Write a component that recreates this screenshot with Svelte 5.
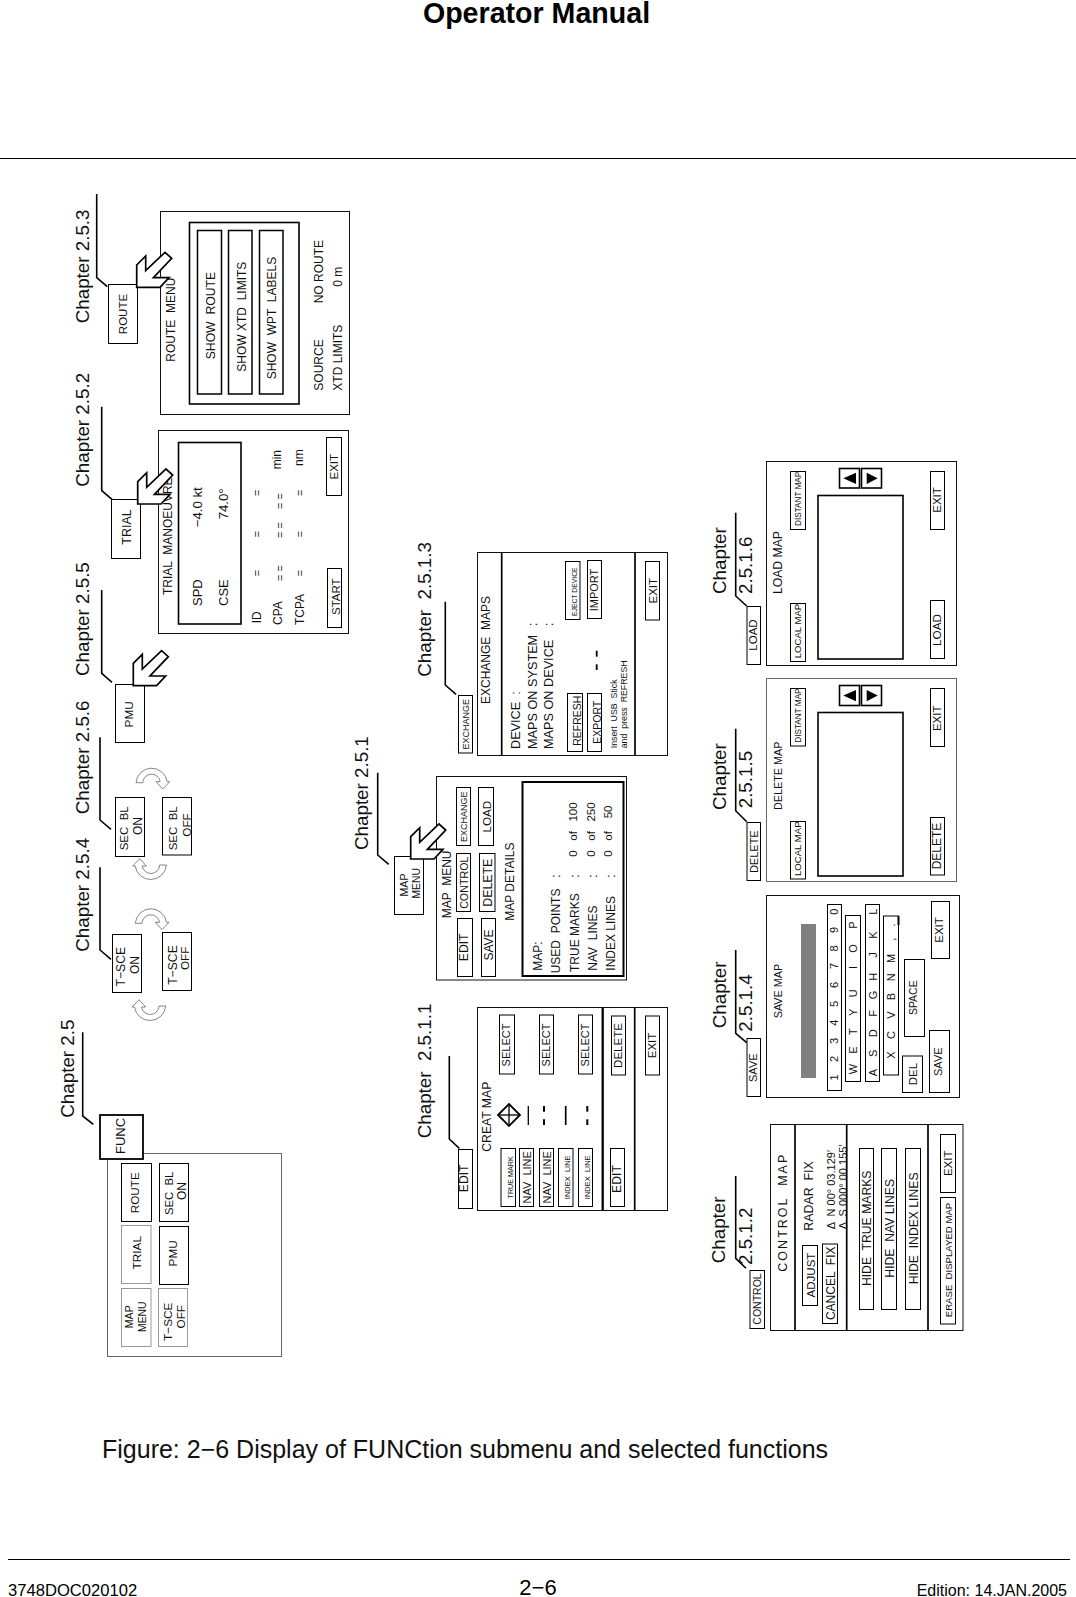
<script>
  // [x1, y1, x2, y2, class]
  const rects = [
    // ROUTE
    [160.5,211.5,349.5,414.5,'p'],[189.5,222.5,299,404,'k'],[197.5,230.5,221.5,394,'b2'],[228.5,230.5,252,394,'b2'],[259.5,230.5,283,394,'b2'],
    [108.5,284.5,137.5,343.5,'b'],
    // TRIAL
    [158.5,430.5,348.5,633.5,'p'],[178.5,442.5,241,624,'k'],[326.5,437.5,341.5,495.5,'b'],[327.5,568.5,341.5,627.5,'b'],[111.5,499.5,140.5,558.5,'b'],
    // PMU / toggles
    [115.5,684.5,144.5,742.5,'b'],[115.5,797.5,144.5,856.5,'b'],[162.5,797.5,191.5,855,'b'],[112.5,934.5,141.5,992.5,'b'],[162.5,932.5,191.5,990.5,'b'],
    // FUNC panel
    [107.5,1153.5,281.5,1356.5,'pg'],[121.5,1163.5,151.5,1221.5,'b'],[159.5,1163.5,188.5,1221.5,'b'],[121.5,1225.5,151,1283.5,'g'],[159.5,1226.5,188.5,1284.5,'b'],[121.5,1288.5,151,1346.5,'g'],[158.5,1288.5,187.5,1346.5,'g'],
    // MAP MENU
    [394.5,856.5,423.5,914.5,'b'],[436.5,776.5,626.5,980,'p'],[456.5,787.5,470.5,845.5,'b'],[478.5,787.5,493.5,845.5,'b'],[456.5,853.5,470.5,911.5,'b'],[479.5,853.5,495,911.5,'b'],[457.5,918.5,472.5,976.5,'b'],[481.5,918.5,495.5,976.5,'b'],[522.5,782,623.5,976,'k2'],
    // EXCHANGE
    [477.5,552.5,667.5,755.5,'p'],[458.5,695.5,472.5,753,'b'],[565.5,561.5,580,619.5,'b'],[587.5,560.5,601.5,618.5,'b'],[567.5,693.5,582.5,751.5,'b'],[587.5,693.5,601.5,751.5,'b'],[645.5,561.5,659.5,620,'b'],
    // EDIT
    [477.5,1007.5,667.5,1210.5,'p'],[458.5,1149.5,472.5,1208.5,'b'],[499.5,1015,514.5,1074,'b'],[539.5,1015,553.5,1074,'b'],[578.5,1015,592.5,1074,'b'],[611.5,1016,625.5,1075,'b'],[645.5,1016,659.5,1075,'b'],
    [501,1148.5,515.5,1206.5,'b'],[519.5,1148.5,533.5,1206.5,'b'],[539.5,1148.5,553.5,1206.5,'b'],[558.5,1148.5,573,1206.5,'b'],[578.5,1148.5,592.5,1206.5,'b'],[610.5,1148.5,624.5,1206.5,'b'],
    // LOAD
    [766.5,461.5,956.5,665.5,'p'],[747,606.5,760.5,664.5,'b'],[790.5,471.5,805.5,529.5,'b'],[790.5,603.5,805.5,661.5,'b'],[818,495.5,903,659,'k'],[930.5,471.5,944.5,529.5,'b'],[930.5,600.5,944.5,658.5,'b'],[839.5,468.5,859.5,488,'k'],[861.5,468.5,881.5,488,'k'],
    // DELETE
    [766.5,678.5,956.5,881.5,'pg'],[747,822.5,760.5,880.5,'b'],[790.5,688.5,805.5,746,'b'],[790.5,821.5,805.5,879,'b'],[818,712.5,903,876,'k'],[930.5,688.5,944.5,746.5,'b'],[930.5,817.5,944.5,875,'b'],[839.5,685.5,859.5,705.5,'k'],[861.5,685.5,881.5,705.5,'k'],
    // SAVE
    [766.5,895.5,959.5,1097.5,'p'],[747,1038.5,760.5,1096.5,'b'],[801,924,816,1078,'fill'],[827.5,904.5,841.5,1090.5,'b'],[845.5,915.5,860.5,1081.5,'b'],[865.5,904.5,879.5,1081.5,'b'],[883.5,916,898.5,1075,'b'],[902.5,1056,922.5,1092.5,'b'],[904.5,959.5,924.5,1036.5,'b'],[931.5,901.5,949.5,958.5,'b'],[929.5,1030.5,949.5,1092.5,'b'],
    // CONTROL
    [770.5,1124.5,963,1330.5,'p'],[750,1270.5,764.5,1328.5,'b'],[802.5,1245.5,817.5,1305.5,'b'],[822.5,1244,837.5,1323.5,'b'],[859.5,1148.5,873.5,1309.5,'b'],[881.5,1148.5,896.5,1309.5,'b'],[905.5,1148.5,920.5,1309.5,'b'],[940.5,1134.5,955.5,1192.5,'b'],[940.5,1197.5,955.5,1324,'b'],
  ];

  // leader lines and dividers
  const leaders = [
    '96.7,194 96.7,277.7 107.3,286.7','101.7,406.7 101.7,490.7 112,499.3','101.7,590 101.7,673.3 112,682.3',
    '100,737.3 100,820 111,829.3','100,867.3 100,950 111,959.3','82.7,1032.3 82.7,1116 93.3,1124.3',
    '377.7,772.7 377.7,855 388.7,864.3','445.3,601.7 445.3,685 456,694.3','449.3,1056 449.3,1139 459.3,1148.3',
    '735.7,512.7 735.7,596 746.7,606','735.7,728.7 735.7,810.7 746.7,821.7','735.7,950 735.7,1033.3 746.7,1042.7','735.7,1176 735.7,1258.3 746,1268.3',
  ];
  // [x1, y1, x2, y2, width]
  const rules = [
    [501.7,552.5,501.7,755.5,1.7],[635,552.5,635,755.5,1.7],[602.7,1007.5,602.7,1210.5,2.3],[634.7,1007.5,634.7,1210.5,1.7],
    [795,1124.5,795,1330.5,1.7],[846.7,1124.5,846.7,1330.5,1.7],[928,1124.5,928,1330.5,1.7],
    [596.7,650.7,596.7,656.7,1.8],[596.7,664.3,596.7,670,1.8],
    [528.3,1106,528.3,1125,1.3],[544,1106,544,1111.7,2],[544,1119.3,544,1125,2],[565.7,1106,565.7,1125,1.7],[587.3,1106,587.3,1111.7,2],[587.3,1119.3,587.3,1125,2],
    [898.5,916,898.5,925,2],
  ];
  const tris = ['843.3,478.3 856,472.7 856,484','877.7,478.3 866.7,472.7 866.7,484','843.3,695.5 856,689.9 856,701.2','877.7,695.5 866.7,689.9 866.7,701.2'];

  // [baseline x, y, text, size, anchor, textLength?]
  const ch = 18.8;
  const texts = [
    [89,323.3,'Chapter 2.5.3',ch,'start'],[89,486.7,'Chapter 2.5.2',ch,'start'],[89,676,'Chapter 2.5.5',ch,'start'],[89,814.3,'Chapter 2.5.6',ch,'start'],[89,951.7,'Chapter 2.5.4',ch,'start'],[74,1117.7,'Chapter 2.5',ch,'start'],
    [368.3,850,'Chapter 2.5.1',ch,'start'],[430.7,676.7,'Chapter  2.5.1.3',ch,'start'],[430.7,1138.3,'Chapter  2.5.1.1',ch,'start'],
    [726,594,'Chapter',ch,'start'],[751.7,594,'2.5.1.6',ch,'start'],[726,810,'Chapter',ch,'start'],[751.7,808.3,'2.5.1.5',ch,'start'],[726,1028.3,'Chapter',ch,'start'],[751.7,1031.7,'2.5.1.4',ch,'start'],[725,1263.3,'Chapter',ch,'start'],[751.7,1265,'2.5.1.2',ch,'start'],
    // ROUTE
    [127.3,314,'ROUTE',11.5,'middle'],[175,361.7,'ROUTE  MENU',12,'start'],[215,359.3,'SHOW  ROUTE',12.2,'start'],[246,371.7,'SHOW XTD  LIMITS',12,'start'],[275.7,379.3,'SHOW  WPT  LABELS',12,'start'],
    [323.3,390.7,'SOURCE',12,'start'],[323.3,303.3,'NO ROUTE',12,'start'],[342.3,390.7,'XTD LIMITS',12,'start'],[342.3,286.7,'0 m',12,'start'],
    // TRIAL
    [130.7,527,'TRIAL',12.5,'middle'],[171.7,595,'TRIAL  MANOEUVRE',12,'start'],[201.7,606,'SPD',13,'start'],[201.7,527.3,'−4.0 kt',13.2,'start'],[228.3,606,'CSE',13,'start'],[228.3,519.3,'74.0°',13.2,'start'],
    [260.7,623.3,'ID',12,'start'],[282.3,625,'CPA',12,'start'],[304,625,'TCPA',12,'start'],[280.7,469.3,'min',12,'start'],[303.3,466,'nm',12,'start'],
    [261,573,'=',11,'middle'],[261,534,'=',11,'middle'],[261,492.7,'=',11,'middle'],[284,573,'= =',11,'middle'],[284,530,'= =',11,'middle'],[284,501,'= =',11,'middle'],[304,573,'=',11,'middle'],[304,534,'=',11,'middle'],[304,492.7,'=',11,'middle'],
    [337.7,466.7,'EXIT',11.5,'middle'],[340,596.7,'START',11.5,'middle'],
    // PMU, toggles
    [132.7,714.3,'PMU',11.8,'middle'],[128.3,828.3,'SEC  BL',11.5,'middle'],[141.7,826,'ON',12,'middle'],[176.7,828.3,'SEC  BL',11.5,'middle'],[191.3,825,'OFF',11.8,'middle'],
    [125.3,966.7,'T−SCE',12.2,'middle'],[139.3,965,'ON',12,'middle'],[176.7,965,'T−SCE',12.2,'middle'],[189.3,958.3,'OFF',11.8,'middle'],
    // FUNC panel
    [139.3,1192.7,'ROUTE',11.7,'middle'],[172.7,1193.3,'SEC  BL',11.3,'middle'],[186,1191,'ON',12,'middle'],[140.7,1252.7,'TRIAL',11.8,'middle'],[177,1253.3,'PMU',11.8,'middle'],
    [133.3,1316.7,'MAP',10.7,'middle'],[145.7,1316.7,'MENU',10.4,'middle'],[171.7,1321.7,'T−SCE',11.8,'middle'],[185,1316.7,'OFF',11.7,'middle'],
    // MAP MENU
    [408.3,885,'MAP',10.7,'middle'],[420,883.3,'MENU',10.3,'middle'],[450.7,918.3,'MAP  MENU',12,'start'],[467.3,816.7,'EXCHANGE',9,'middle'],[490.7,816.7,'LOAD',11.7,'middle'],[468.3,882.7,'CONTROL',10.7,'middle'],[491.7,882.7,'DELETE',12.3,'middle'],[468.3,947.3,'EDIT',12.2,'middle'],[493.3,945,'SAVE',12,'middle'],[514.3,881.7,'MAP DETAILS',12,'middle'],
    [541.7,970.7,'MAP:',12,'start'],[560,973.3,'USED  POINTS',12,'start'],[579,972,'TRUE MARKS',12,'start'],[596.7,970.7,'NAV  LINES',12,'start'],[615,970.7,'INDEX LINES',12,'start'],[560,876,':',12,'middle'],[579,876,':',12,'middle'],[596.7,876,':',12,'middle'],[615,876,':',12,'middle'],
    [576.7,856.7,'0   of   100',11.5,'start'],[595,856.7,'0   of   250',11.5,'start'],[612.3,856.7,'0   of    50',11.5,'start'],
    // EXCHANGE
    [469,724.3,'EXCHANGE',9,'middle'],[490,704,'EXCHANGE  MAPS',12,'start'],[520,749,'DEVICE  :',12.7,'start'],[536.7,749,'MAPS ON SYSTEM',12.7,'start'],[536.7,624.3,':',12,'middle'],[553.3,749,'MAPS ON DEVICE',12.7,'start'],[553.3,624.3,':',12,'middle'],
    [577.3,591.7,'EJECT DEVICE',6.8,'middle'],[598.3,590,'IMPORT',11,'middle'],[581.3,720.7,'REFRESH',10.5,'middle'],[601,722.3,'EXPORT',10.5,'middle'],[616.7,748.3,'Insert  USB  Stick',8.8,'start'],[626.7,748.3,'and  press  REFRESH',8.8,'start'],[656.7,590.7,'EXIT',11.5,'middle'],
    // EDIT
    [468.3,1178.3,'EDIT',12.2,'middle'],[490.7,1151.7,'CREAT MAP',12.2,'start'],[510,1045,'SELECT',11,'middle'],[550,1045,'SELECT',11,'middle'],[589,1045,'SELECT',11,'middle'],[621.7,1045.5,'DELETE',11.5,'middle'],[656,1045.5,'EXIT',11.5,'middle'],
    [512.7,1177.3,'TRUE MARK',7.2,'middle'],[531,1177.3,'NAV  LINE',11,'middle'],[551,1177.3,'NAV  LINE',11,'middle'],[570,1177.3,'INDEX  LINE',7.5,'middle'],[590,1177.3,'INDEX  LINE',7.5,'middle'],[621,1179,'EDIT',12.2,'middle'],
    // LOAD
    [757.3,635,'LOAD',11.5,'middle'],[801.3,526,'DISTANT MAP',8.2,'start'],[801.3,658.3,'LOCAL MAP',9.6,'start'],[781.7,594,'LOAD MAP',12.2,'start'],[940.7,500,'EXIT',11.5,'middle'],[940.7,630,'LOAD',11.7,'middle'],
    // DELETE
    [757.7,851.7,'DELETE',11,'middle'],[801.3,742.7,'DISTANT MAP',8.2,'start'],[801.3,876,'LOCAL MAP',9.6,'start'],[781.7,810,'DELETE MAP',10.8,'start'],[940.7,718.3,'EXIT',11.5,'middle'],[940.7,846,'DELETE',12,'middle'],
    // SAVE
    [757.3,1067.7,'SAVE',11,'middle'],[781.7,1018.3,'SAVE MAP',10.8,'start'],[916.7,1074,'DEL',11.5,'middle'],[916.7,997.7,'SPACE',10.5,'middle'],[943.3,930,'EXIT',11.5,'middle'],[941.7,1061.7,'SAVE',11,'middle'],
    // CONTROL
    [761,1299,'CONTROL',10.5,'middle'],[787.3,1271.7,'CONTROL  MAP',12.5,'start',117],[812.7,1230.7,'RADAR  FIX',12.4,'start'],[835,1229.3,'Δ  N 00° 03.129′',11,'start'],[846.7,1229.3,'Δ  S 000° 00.155′',11,'start'],
    [815,1275,'ADJUST',11.5,'middle'],[835,1283.3,'CANCEL  FIX',12,'middle'],[871,1228.3,'HIDE  TRUE MARKS',12.2,'middle'],[894,1228.3,'HIDE  NAV LINES',12.2,'middle'],[918.3,1228.3,'HIDE  INDEX LINES',12.2,'middle'],[952.3,1163.3,'EXIT',11.5,'middle'],[951.7,1260,'ERASE  DISPLAYED MAP',9.6,'middle'],
  ];

  // keyboard rows: [baseline x, [[key, y] ...]]
  const kb = (x, s) => s.map(([k, p]) => [x, 880 + p / 3, k, 11, 'middle']);
  const keys = [
    ...kb(838.3,[['1',592],['2',537],['3',483],['4',428],['5',372],['6',315],['7',258],['8',205],['9',150],['0',95]]),
    ...kb(856.7,[['W',567],['E',510],['T',455],['Y',397],['U',340],['I',262],['O',205],['P',135]]),
    ...kb(876.7,[['A',578],['S',520],['D',460],['F',400],['G',345],['H',290],['J',225],['K',165],['L',95]]),
    ...kb(895,[['X',525],['C',465],['V',405],['B',350],['N',292],['M',235],[',',178],['.',135]]),
  ];

  const arrows = [[136.7,287.3],[137.7,504],[133.3,685.7],[410.7,859]];
  const loops = [[151.7,782.7,0],[150.7,865,180],[151,923.3,0],[150,1006,180]];
</script>

<div class="page">
  <header class="head"><h1>Operator Manual</h1></header>

  <svg class="figure" viewBox="0 159 1076 1269" width="1076" height="1269" role="img" aria-label="FUNC submenu diagram">
    {#each rects as [x1, y1, x2, y2, c]}
      <rect x={x1} y={y1} width={x2 - x1} height={y2 - y1} class={c} />
    {/each}
    {#each rules as [x1, y1, x2, y2, w]}
      <line {x1} {y1} {x2} {y2} stroke-width={w} class="rule" />
    {/each}
    {#each leaders as pts}
      <polyline points={pts} class="leader" />
    {/each}
    {#each tris as pts}
      <polygon points={pts} class="tri" />
    {/each}

    <g transform="translate(509 1115)" class="target">
      <polygon points="-11,0 0,-11 11,0 0,11" />
      <line x1="-11" y1="0" x2="11" y2="0" />
      <line x1="0" y1="-11" x2="0" y2="11" />
    </g>

    {#each [...texts, ...keys] as [x, y, s, size, anchor, len]}
      <text {x} {y} font-size={size} text-anchor={anchor} textLength={len} transform="rotate(-90 {x} {y})">{s}</text>
    {/each}

    {#each loops as [x, y, r]}
      <path class="loop" transform="translate({x} {y}) rotate({r})" d="M-15.7 0A15.7 15.7 0 0 1 15.5 -1L18 -1 11 6.3 4.3 -1 8.5 -1A8.8 8.8 0 0 0 -9 0Z" />
    {/each}

    <rect x="100" y="1115" width="43" height="44" class="func" />
    <text x="125" y="1136" font-size="13" text-anchor="middle" transform="rotate(-90 125 1136)">FUNC</text>

    {#each arrows as [x, y]}
      <polygon class="arrow" transform="translate({x} {y})" points="0,0 0,-22.3 9,-31.3 9,-16.7 28.3,-35 35,-29 16.7,-9.7 32.3,-9.7 23.3,0" />
    {/each}
  </svg>

  <p class="caption">Figure: 2−6 Display of FUNCtion submenu and selected functions</p>

  <footer class="foot">
    <span class="doc">3748DOC020102</span>
    <span class="num">2−6</span>
    <span class="ed">Edition: 14.JAN.2005</span>
  </footer>
</div>

<style>
  :global(body) { margin: 0; background: #fff; }
  .page {
    width: 1076px;
    height: 1597px;
    display: flex;
    flex-direction: column;
    overflow: hidden;
    font-family: "Liberation Sans", Arial, sans-serif;
    color: #000;
    background: #fff;
  }
  .head { height: 158px; border-bottom: 1px solid #000; flex: none; }
  h1 { margin: 0; padding-right: 3px; text-align: center; font-size: 28.6px; line-height: 26px; font-weight: 700; }
  .figure { display: block; flex: none; }
  .figure text { font-family: "Liberation Sans", Arial, sans-serif; fill: #111; white-space: pre; }
  rect { fill: none; stroke: #000; stroke-width: 1; }
  rect.p { fill: #fff; stroke: #111; }
  rect.pg { fill: #fff; stroke: #666; }
  rect.b { fill: #fff; }
  rect.b2 { fill: none; stroke-width: 1.5; }
  rect.g { fill: #fff; stroke: #999; }
  rect.k { fill: none; stroke-width: 1.6; }
  rect.k2 { fill: none; stroke-width: 2; }
  rect.fill { fill: #808080; stroke: none; }
  rect.func { fill: #fff; stroke-width: 1.8; }
  .rule { stroke: #000; }
  .leader { fill: none; stroke: #000; stroke-width: 1.6; }
  .tri { fill: #000; }
  .target polygon { fill: none; stroke: #000; stroke-width: 1.8; }
  .target line { stroke: #000; stroke-width: 1.3; }
  .loop { fill: #fff; stroke: #666; stroke-width: 0.8; }
  .arrow { fill: #fff; stroke: #000; stroke-width: 1.7; stroke-linejoin: miter; }
  .caption { margin: 0; height: 131px; flex: none; box-sizing: border-box; padding: 7px 0 0 102px; font-size: 25px; line-height: 28px; color: #111; }
  .foot {
    margin: 0 6px 0 8px;
    border-top: 1px solid #000;
    flex: 1;
    display: grid;
    grid-template-columns: 1fr auto 1fr;
    align-items: end;
  }
  .doc { font-size: 16.6px; line-height: 12px; }
  .num { font-size: 22px; line-height: 19px; padding-right: 2px; }
  .ed { font-size: 16px; line-height: 12px; text-align: right; padding-right: 3px; }
</style>
